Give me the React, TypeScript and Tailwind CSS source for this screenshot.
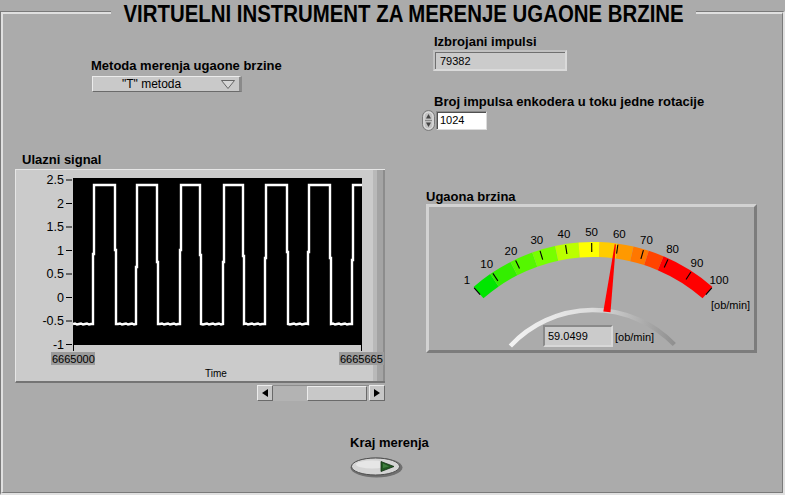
import React from "react";

// gauge geometry (page coordinates)
const CX = 593;
const CY = 423;
const R_OUT = 181;
const R_IN = 166;

const rad = (v: number) => ((-41.3 + ((v - 1) / 99) * 82.6) * Math.PI) / 180;
const pt = (r: number, v: number) => [CX + r * Math.sin(rad(v)), CY - r * Math.cos(rad(v))];

function sector(a: number, b: number) {
  const [x1, y1] = pt(R_OUT, a);
  const [x2, y2] = pt(R_OUT, b);
  const [x3, y3] = pt(R_IN, b);
  const [x4, y4] = pt(R_IN, a);
  return `M${x1} ${y1} A${R_OUT} ${R_OUT} 0 0 1 ${x2} ${y2} L${x3} ${y3} A${R_IN} ${R_IN} 0 0 0 ${x4} ${y4} Z`;
}

const SEGMENTS: [number, number, string][] = [
  [1, 9, "#00e600"],
  [9, 18, "#33ee00"],
  [18, 27, "#55f700"],
  [27, 36, "#77ff00"],
  [36, 45, "#bbff00"],
  [45, 53, "#ffff00"],
  [53, 60, "#ffcc00"],
  [60, 66, "#ff9900"],
  [66, 72, "#ff7700"],
  [72, 78, "#ff4400"],
  [78, 100, "#ff0000"],
];

const TICKS = [1, 10, 20, 30, 40, 50, 60, 70, 80, 90, 100];
const VALUE = 59.0499;

// square wave (page coordinates)
const HI = 185;
const LO = 324;
const RISES = [[93, 254], [136, 267], [180, 250], [223, 262], [265, 258], [308, 252], [352, 260]];
const FALLS = [[115, 250], [157, 262], [200, 255], [243, 256], [287, 252], [330, 258]];

function wavePath() {
  const edges = [
    ...RISES.map(([x, m]) => ({ x, m, up: true })),
    ...FALLS.map(([x, m]) => ({ x, m, up: false })),
  ].sort((a, b) => a.x - b.x);
  let d = `M73 ${LO}`;
  let cur = 73;
  for (const e of edges) {
    if (e.up) {
      for (let x = cur + 2; x < e.x - 1; x += 2) {
        d += ` L${x} ${LO + (((x * 7) % 3) - 1) * 0.5}`;
      }
      d += ` L${e.x} ${LO} L${e.x} ${e.m} L${e.x + 1} ${e.m} L${e.x + 1} ${HI}`;
    } else {
      d += ` L${e.x} ${HI} L${e.x} ${e.m} L${e.x + 1} ${e.m} L${e.x + 1} ${LO}`;
    }
    cur = e.x + 1;
  }
  d += ` L362 ${HI}`;
  return d;
}

const Y_LABELS = ["2.5", "2", "1.5", "1", "0.5", "0", "-0.5", "-1"];

function Chart() {
  return (
    <div className="relative mt-[1px] w-[370px] h-[214px] flex bg-[#cbcbcb] border-t border-l border-b-2 border-t-[#e6e6e6] border-l-[#e6e6e6] border-b-[#747474]">
      <div className="flex-1" />
      <div className="w-[12px] bg-[linear-gradient(90deg,#b9b9b9_0_4px,#a4a4a4_4px_10px,#8c8c8c_10px)]" />
      <svg
        className="absolute left-[-1px] top-[-1px] overflow-visible"
        width={370}
        height={214}
        viewBox="15 169 370 214"
      >
        <defs>
          <clipPath id="plot">
            <rect x={73} y={178} width={289} height={167} />
          </clipPath>
        </defs>
        <rect x={73} y={178} width={289} height={167} fill="#000" />
        <path d={wavePath()} fill="none" stroke="#fff" strokeWidth={2.4} clipPath="url(#plot)" />
        {Y_LABELS.map((l, i) => {
          const y = 180 + i * 23.5;
          return (
            <g key={l}>
              <line x1={66} x2={72} y1={y} y2={y} stroke="#000" strokeWidth={1} />
              <text
                x={64}
                y={y + 4.3}
                textAnchor="end"
                fontSize={12.5}
                fontFamily="'Liberation Sans', Arial, sans-serif"
              >
                {l}
              </text>
            </g>
          );
        })}
        <line x1={73.5} x2={73.5} y1={345} y2={351} stroke="#000" />
        <line x1={361.5} x2={361.5} y1={345} y2={351} stroke="#000" />
        <rect x={51} y={352} width={44} height={13} fill="#9b9b9b" />
        <rect x={339} y={352} width={45} height={13} fill="#9b9b9b" />
        <text x={52} y={362.5} fontSize={11} fontFamily="'Liberation Sans', Arial, sans-serif">
          6665000
        </text>
        <text x={340} y={362.5} fontSize={11} fontFamily="'Liberation Sans', Arial, sans-serif">
          6665665
        </text>
        <text x={216} y={377} textAnchor="middle" fontSize={10} fontFamily="'Liberation Sans', Arial, sans-serif">
          Time
        </text>
      </svg>
    </div>
  );
}

function Scrollbar() {
  return (
    <div className="mt-[2px] ml-[242px] w-[128px] h-[16px] flex">
      <div className="w-[16px] h-full flex items-center justify-center bg-[#c6c6c6] border border-t-[#ececec] border-l-[#ececec] border-b-[#6a6a6a] border-r-[#6a6a6a]">
        <svg width="6" height="8" viewBox="0 0 6 8">
          <path d="M6 0 L0 4 L6 8 Z" fill="#000" />
        </svg>
      </div>
      <div className="flex-1 h-full bg-[#b3b3b3] border-t border-t-[#8c8c8c] pl-[34px]">
        <div className="w-[60px] h-full bg-[#c8c8c8] border border-t-[#ececec] border-l-[#ececec] border-b-[#6a6a6a] border-r-[#6a6a6a]" />
      </div>
      <div className="w-[16px] h-full flex items-center justify-center bg-[#c6c6c6] border border-t-[#ececec] border-l-[#ececec] border-b-[#6a6a6a] border-r-[#6a6a6a]">
        <svg width="6" height="8" viewBox="0 0 6 8">
          <path d="M0 0 L6 4 L0 8 Z" fill="#000" />
        </svg>
      </div>
    </div>
  );
}

function Gauge() {
  const a = rad(VALUE);
  const ux = Math.sin(a);
  const uy = -Math.cos(a);
  const px = Math.cos(a);
  const py = Math.sin(a);
  const b = [CX + 112 * ux, CY + 112 * uy];
  const t = [CX + 180 * ux, CY + 180 * uy];
  const needle = [
    [b[0] - 3.6 * px, b[1] - 3.6 * py],
    [t[0] - 0.6 * px, t[1] - 0.6 * py],
    [t[0] + 0.6 * px, t[1] + 0.6 * py],
    [b[0] + 3.6 * px, b[1] + 3.6 * py],
  ]
    .map((p) => p.join(","))
    .join(" ");

  const bz = (deg: number, r: number) => {
    const q = (deg * Math.PI) / 180;
    return `${CX + r * Math.sin(q)} ${CY - r * Math.cos(q)}`;
  };

  return (
    <div className="relative -mt-[1px] ml-[4px] w-[331px] h-[149px] border-[3px] border-t-[#d2d2d2] border-l-[#d2d2d2] border-b-[#7c7c7c] border-r-[#7c7c7c]">
      <svg className="absolute left-0 top-0 overflow-visible" width={325} height={143} viewBox="429 207 325 143">
        <defs>
          <linearGradient id="bezel" x1="505" x2="680" y1="0" y2="0" gradientUnits="userSpaceOnUse">
            <stop offset="0" stopColor="#f4f4f4" />
            <stop offset="0.5" stopColor="#dcdcdc" />
            <stop offset="1" stopColor="#8a8a8a" />
          </linearGradient>
        </defs>
        {SEGMENTS.map(([s, e, c]) => (
          <path key={s} d={sector(s, e)} fill={c} />
        ))}
        {TICKS.map((v) => {
          const [x1, y1] = pt(171, v);
          const [x2, y2] = pt(180, v);
          const [lx, ly] = pt(191, v);
          return (
            <g key={v}>
              <line x1={x1} y1={y1} x2={x2} y2={y2} stroke="#000" strokeWidth={1.1} />
              <text
                x={lx}
                y={ly + 4}
                textAnchor="middle"
                fontSize={11.5}
                fontFamily="'Liberation Sans', Arial, sans-serif"
              >
                {v}
              </text>
            </g>
          );
        })}
        <path
          d={`M${bz(-47, 113)} A113 113 0 0 1 ${bz(46, 113)}`}
          fill="none"
          stroke="url(#bezel)"
          strokeWidth={4.5}
        />
        <polygon points={needle} fill="#ff0000" />
      </svg>
      <div className="absolute left-[282px] top-[92px] text-[11px] leading-[12px]">[ob/min]</div>
      <div className="absolute left-[114px] top-[118px] flex items-center">
        <div className="w-[70px] h-[22px] bg-[#cbcbcb] border-2 border-t-[#8a8a8a] border-l-[#8a8a8a] border-b-[#d8d8d8] border-r-[#d8d8d8] pl-[3px] text-[11px] leading-[18px]">
          59.0499
        </div>
        <span className="ml-[2px] text-[11px] leading-[18px] mt-[2px]">[ob/min]</span>
      </div>
    </div>
  );
}

function Incrementer() {
  return (
    <svg width="13" height="21" viewBox="0 0 13 21">
      <rect x="0.5" y="0.5" width="12" height="20" rx="6" fill="#c2c2c2" stroke="#7a7a7a" />
      <rect x="2" y="2" width="9" height="17" rx="4.5" fill="none" stroke="#e4e4e4" />
      <path d="M6.5 4 L4 8.5 L9 8.5 Z" fill="#444" />
      <path d="M6.5 17 L4 12.5 L9 12.5 Z" fill="#444" />
      <line x1="3" x2="10" y1="10.5" y2="10.5" stroke="#8a8a8a" />
    </svg>
  );
}

function StopButton() {
  return (
    <svg width="53" height="22" viewBox="0 0 53 22">
      <ellipse cx="26.5" cy="11.5" rx="26" ry="10" fill="#6f6f6f" />
      <ellipse cx="25.5" cy="10.5" rx="24" ry="8.5" fill="#d4d4d4" stroke="#4f4f4f" strokeWidth="1" />
      <ellipse cx="22" cy="8.5" rx="16" ry="4" fill="#e6e6e6" />
      <path d="M31 5.5 L44 10.5 L31 15.5 Z" fill="#235a23" stroke="#132e13" strokeWidth="0.8" />
      <path d="M33 7.5 L39 10.5 L33 12 Z" fill="#3f7f3f" />
    </svg>
  );
}

export default function App() {
  const label = "text-[13px] font-bold leading-[16px] whitespace-nowrap";
  return (
    <div className="w-[785px] h-[495px] bg-[#ababab] overflow-hidden font-['Liberation_Sans',Arial,sans-serif] text-black">
      <div className="mt-[11px] h-[484px] border-t border-l border-r-2 border-b-2 border-t-[#7a7a7a] border-l-[#7a7a7a] border-r-[#e0e0e0] border-b-[#e0e0e0]">
        <div className="h-full flex flex-col border-t-2 border-l-2 border-r border-b border-t-[#e0e0e0] border-l-[#e0e0e0] border-r-[#7a7a7a] border-b-[#7a7a7a]">
          <div className="-mt-[10px] h-[20px] pl-[108px] flex">
            <h1 className="bg-[#ababab] w-[585px] h-[20px] flex justify-center overflow-visible">
              <span className="inline-block scale-x-[0.85] text-[24px] leading-[20px] font-bold whitespace-nowrap">
                VIRTUELNI INSTRUMENT ZA MERENJE UGAONE BRZINE
              </span>
            </h1>
          </div>

          <div className="flex items-start">
            {/* left column */}
            <div className="ml-[12px] w-[370px] flex flex-col">
              <div className={`${label} ml-[76px] mt-[34px]`}>Metoda merenja ugaone brzine</div>
              <div className="ml-[77px] mt-[2px] w-[150px] h-[16px] flex items-center bg-[#c9c9c9] border border-t-[#ececec] border-l-[#ececec] border-b-[#6a6a6a] border-r-[3px] border-r-[#8a8a8a]">
                <span className="ml-[29px] text-[12px] leading-[14px] whitespace-nowrap">"T" metoda</span>
                <svg className="ml-auto mr-[4px]" width="14" height="9" viewBox="0 0 14 9">
                  <path d="M0.5 0.5 L13.5 0.5 L7 8.5 Z" fill="#d6d6d6" stroke="#5a5a5a" strokeWidth="0.9" />
                </svg>
              </div>

              <div className={`${label} ml-[7px] mt-[60px]`}>Ulazni signal</div>
              <Chart />
              <Scrollbar />
            </div>

            {/* right column */}
            <div className="ml-[37px] flex flex-col">
              <div className={`${label} ml-[12px] mt-[10px]`}>Izbrojani impulsi</div>
              <div className="ml-[11px] w-[134px] h-[21px] border-2 border-t-[#c2c2c2] border-l-[#c2c2c2] border-b-[#dadada] border-r-[#dadada]">
                <div className="h-full bg-[#cbcbcb] border-t border-l border-t-[#707070] border-l-[#707070] pl-[4px] text-[11px] leading-[16px]">
                  79382
                </div>
              </div>

              <div className={`${label} ml-[12px] mt-[23px]`}>Broj impulsa enkodera u toku jedne rotacije</div>
              <div className="flex items-center h-[21px]">
                <Incrementer />
                <div className="ml-[1px] w-[51px] h-[19px] border border-t-[#8a8a8a] border-l-[#8a8a8a] border-b-[#dcdcdc] border-r-[#dcdcdc]">
                  <div className="h-full bg-white border-t border-l border-t-[#505050] border-l-[#505050] pl-[2px] text-[11px] leading-[15px]">
                    1024
                  </div>
                </div>
              </div>

              <div className={`${label} ml-[4px] mt-[58px]`}>Ugaona brzina</div>
              <Gauge />
            </div>
          </div>

          <div className="ml-[347px] mt-[34px] flex flex-col">
            <div className={label}>Kraj merenja</div>
            <div className="mt-[5px]">
              <StopButton />
            </div>
          </div>
        </div>
      </div>
    </div>
  );
}
